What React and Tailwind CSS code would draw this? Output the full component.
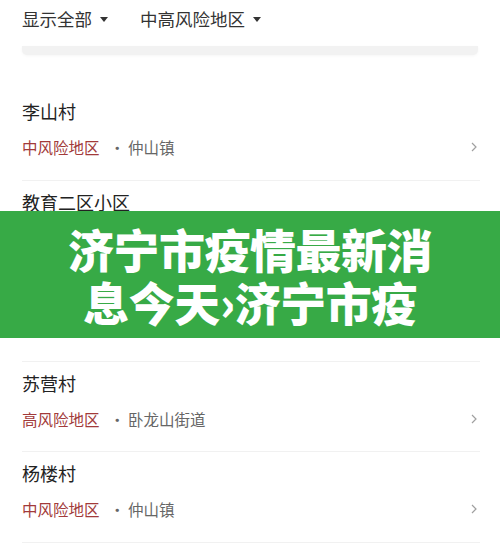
import React from 'react'

const rows = [
    { name: '李山村', level: '中风险地区', town: '仲山镇' },
    { name: '教育二区小区', level: '中风险地区', town: '仲山镇' },
    { name: '西苑小区', level: '中风险地区', town: '仲山镇' },
    { name: '苏营村', level: '高风险地区', town: '卧龙山街道' },
    { name: '杨楼村', level: '中风险地区', town: '仲山镇' },
]

const Caret = () => (
    <svg width="8" height="5" viewBox="0 0 8 5" className="ml-[8px]">
        <path d="M0 0 L8 0 L4 5 Z" fill="#333" />
    </svg>
)

const Chevron = () => (
    <svg width="6" height="10" viewBox="0 0 6 10">
        <path d="M1 1 L5 5 L1 9" fill="none" stroke="#a0a0a0" strokeWidth="1.2" />
    </svg>
)

const App = () => {
    return (
        <div
            className="relative w-[500px] h-[550px] overflow-hidden bg-white"
            style={{ fontFamily: '"Noto Sans CJK SC", "Noto Sans", sans-serif' }}
        >
            <div className="flex items-center h-[38px] pl-[22px] text-[17.5px] text-[#333]">
                <div className="flex items-center">
                    显示全部
                    <Caret />
                </div>
                <div className="flex items-center ml-[32px]">
                    中高风险地区
                    <Caret />
                </div>
            </div>
            <div className="ml-[22px] mr-[22px] mt-[8px] h-[9px] bg-[#f2f2f2] rounded-b-[5px] shadow-[0_1px_3px_rgba(0,0,0,0.04)]"></div>

            <ul className="mt-[35px] pl-[22px] pr-[20px]">
                {rows.map((row, index) => (
                    <li key={index} className="h-[90.5px] border-b border-[#f1f1f1] flex flex-col">
                        <div className="mt-[9px] h-[24px] leading-[24px] text-[18px] text-[#222]">{row.name}</div>
                        <div className="mt-[13px] h-[22px] flex items-center justify-between pr-[3px]">
                            <div className="flex items-center text-[15.5px] leading-[22px]">
                                <span className="text-[#a23a3a]">{row.level}</span>
                                <span className="ml-[10px] text-[#666]">·</span>
                                <span className="ml-[3px] text-[#666]">{row.town}</span>
                            </div>
                            <Chevron />
                        </div>
                    </li>
                ))}
            </ul>

            <div className="absolute left-0 top-[211px] w-full h-[127px] bg-[#37aa46] flex items-center justify-center">
                <p className="text-white font-black text-[46px] leading-[53px] text-center tracking-[-0.5px]">
                    济宁市疫情最新消<br />息今天›济宁市疫
                </p>
            </div>
        </div>
    )
}

export default App
